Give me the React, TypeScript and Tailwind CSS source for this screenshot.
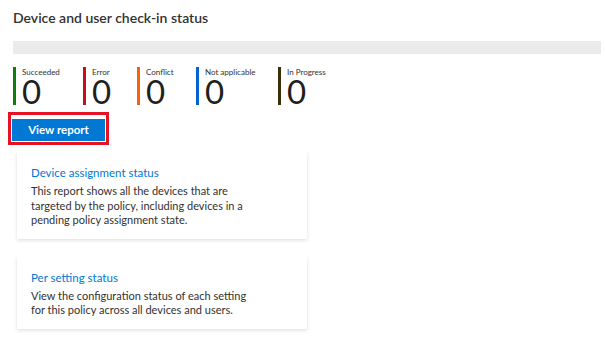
const statuses = [
  {label: 'Succeeded', count: 0, bar: 'bg-[#107c10]', width: 'w-[70px]'},
  {label: 'Error', count: 0, bar: 'bg-[#c50f1f]', width: 'w-[54px]'},
  {label: 'Conflict', count: 0, bar: 'bg-[#f7630c]', width: 'w-[59px]'},
  {label: 'Not applicable', count: 0, bar: 'bg-[#0063d3]', width: 'w-[82px]'},
  {label: 'In Progress', count: 0, bar: 'bg-[#3b2e0a]', width: 'w-[82px]'},
];

const reports = [
  {
    title: 'Device assignment status',
    text: 'This report shows all the devices that are targeted by the policy, including devices in a pending policy assignment state.',
  },
  {
    title: 'Per setting status',
    text: 'View the configuration status of each setting for this policy across all devices and users.',
  },
];

export default function App() {
  return (
    <div className="min-h-[347px] w-[605px] bg-white pl-[13px] pr-[4px] pt-[8px] font-['Segoe_UI','Lato',sans-serif] text-[#323130]">
      <h2 className="text-[14px] font-semibold leading-[20px]">
        Device and user check-in status
      </h2>

      <div className="mt-[13px] h-[13px] w-full bg-[#ebebeb]" />

      <div className="mt-[13px] flex">
        {statuses.map((s) => (
          <div key={s.label} className={`flex gap-[6px] ${s.width}`}>
            <div className={`w-[3px] shrink-0 ${s.bar}`} />
            <div className="flex flex-col">
              <span className="pt-[1px] text-[8px] leading-[9px]">{s.label}</span>
              <span className="text-[33px] leading-[28px] text-[#201f1e]">{s.count}</span>
            </div>
          </div>
        ))}
      </div>

      <div className="mt-[7px] ml-[-5px] w-fit border-[3px] border-[#e81123] p-[1px]">
        <button className="h-[22px] w-[93px] bg-[#0078d4] text-[11.5px] font-bold leading-[22px] text-white">
          View report
        </button>
      </div>

      <div className="mt-[6px] ml-[4px] flex flex-col gap-[17px]">
        {reports.map((r) => (
          <div
            key={r.title}
            className="w-[290px] bg-white px-[14px] pt-[14px] pb-[11px] shadow-[0_1.6px_3.6px_rgba(0,0,0,0.13),0_0.3px_0.9px_rgba(0,0,0,0.11)]"
          >
            <div className="text-[11.5px] leading-[16px] text-[#0078d4]">{r.title}</div>
            <p className="mt-[3px] w-[225px] text-[11px] leading-[14.5px]">{r.text}</p>
          </div>
        ))}
      </div>
    </div>
  );
}
